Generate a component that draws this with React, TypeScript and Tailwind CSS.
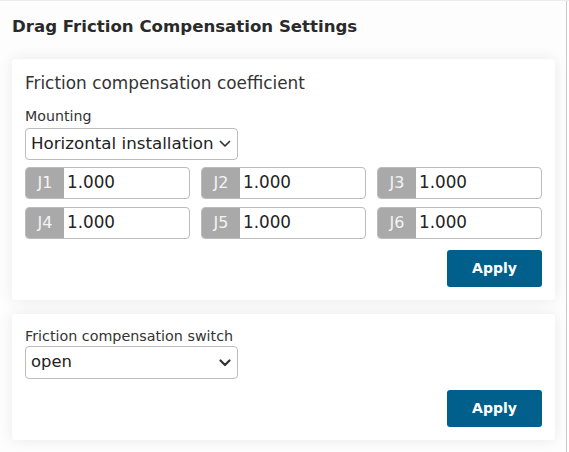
import React from "react";

const font = { fontFamily: '"DejaVu Sans", Verdana, sans-serif' };

function Chevron({ bold = false }: { bold?: boolean }) {
  return (
    <svg width="12" height="8" viewBox="0 0 12 8" className="shrink-0">
      <path d="M1.5 1.5 L6 6 L10.5 1.5" fill="none" stroke="#333" strokeWidth={bold ? 2.2 : 1.7} strokeLinecap="round" strokeLinejoin="round" />
    </svg>
  );
}

function Joint({ n }: { n: number }) {
  return (
    <div className="flex h-[32px] border border-[#bcbcbc] rounded-[4px] overflow-hidden bg-white">
      <div className="w-[38px] bg-[#a9a9a9] text-[#f4f4f4] text-[16px] flex items-center justify-center">J{n}</div>
      <div className="flex-1 flex items-center pl-[3px] text-[16.8px] text-[#222]">1.000</div>
    </div>
  );
}

export default function App() {
  return (
    <div className="w-[569px] h-[452px] bg-white border-t border-[#ececec] text-[#333] overflow-hidden" style={font}>
      <div className="w-[567px] h-full border-r border-[#c8c8c8] bg-[#fdfdfd]">
        <div className="pl-[12px] pt-[16px] pb-[22px] text-[16.6px] font-bold text-[#2a2a2a] leading-[20px]">
          Drag Friction Compensation Settings
        </div>
        <div className="ml-[12px] w-[543px] bg-white rounded-[3px] shadow-[0_0_14px_rgba(0,0,0,0.08)] px-[13px] pt-[14px] pb-[13px]">
          <div className="text-[16.9px] text-[#333] leading-[20px] mb-[15px]">Friction compensation coefficient</div>
          <div className="text-[14.2px] leading-[16px] mb-[4px]">Mounting</div>
          <div className="w-[213px] h-[32px] border border-[#bcbcbc] rounded-[4px] flex items-center justify-between pl-[5px] pr-[6px] text-[16.7px] text-[#222] mb-[7px]">
            <span>Horizontal installation</span>
            <Chevron />
          </div>
          <div className="grid grid-cols-3 gap-x-[11px] gap-y-[8px]">
            {[1, 2, 3, 4, 5, 6].map((n) => (
              <Joint key={n} n={n} />
            ))}
          </div>
          <div className="flex justify-end mt-[11px]">
            <button className="w-[95px] h-[37px] bg-[#015f8b] rounded-[3px] text-white font-bold text-[14px]">Apply</button>
          </div>
        </div>
        <div className="ml-[12px] mt-[14px] w-[543px] bg-white rounded-[3px] shadow-[0_0_14px_rgba(0,0,0,0.08)] px-[13px] pt-[14px] pb-[13px]">
          <div className="text-[14.3px] leading-[16px] mb-[2px]">Friction compensation switch</div>
          <div className="w-[213px] h-[33px] border border-[#bcbcbc] rounded-[4px] flex items-center justify-between pl-[5px] pr-[6px] text-[16.4px] text-[#222]">
            <span>open</span>
            <Chevron bold />
          </div>
          <div className="flex justify-end mt-[11px]">
            <button className="w-[95px] h-[37px] bg-[#015f8b] rounded-[3px] text-white font-bold text-[14px]">Apply</button>
          </div>
        </div>
      </div>
    </div>
  );
}
